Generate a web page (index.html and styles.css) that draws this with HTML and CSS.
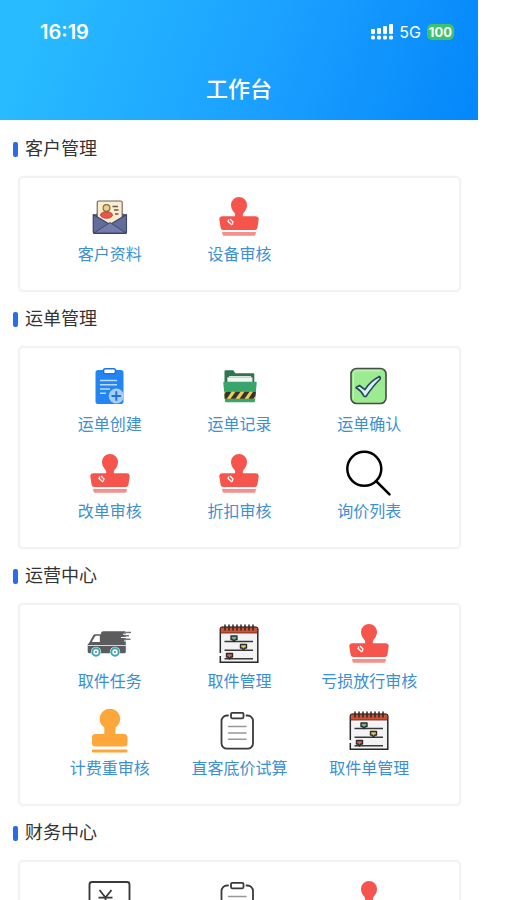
FILE: index.html
```html
<!DOCTYPE html>
<html lang="zh-CN">
    <head>
        <meta charset="utf-8">
        <title>工作台</title>
        <meta name="viewport" content="width=device-width, initial-scale=1.0">
        <link rel="stylesheet" href="styles.css">
    </head>
    <body>
        <svg class="sprite" width="0" height="0" aria-hidden="true">
            <symbol id="stamp" viewBox="0 0 40 40">
                <path fill="#f5554d" d="M20 1a8 8 0 0 1 8 8c0 3.500-1.500 5.500-3.200 7.500-1 1.200-1.200 2.600-.8 3.700h12.500c2 0 3.300 1.200 3.200 3.200L38.500 31c-.2 2-1 3-3 3h-31c-2 0-2.800-1-3-3L.3 23.400c-.1-2 1.200-3.200 3.200-3.200H16c.4-1.100.2-2.500-.8-3.700C13.500 14.500 12 12.500 12 9a8 8 0 0 1 8-8z"/>
                <path fill="#f4908c" d="M3 36h34l-.5 2.500c-.2.800-.7 1.300-1.500 1.300H5c-.8 0-1.300-.5-1.500-1.300z"/>
                <path fill="none" stroke="#fff" stroke-width="1.200" d="M8.500 25l4.500 4M11 23l3.500 3.500M9.500 23.500v2.500M13.500 26.500v2"/>
            </symbol>
            <symbol id="stamp-orange" viewBox="0 0 40 40">
                <path fill="#fda63a" d="M20-1.300a10.200 10.200 0 0 1 5.500 18.800V24H34a3.500 3.500 0 0 1 3.500 3.500V33a3.500 3.500 0 0 1-3.500 3.500H5.500A3.500 3.500 0 0 1 2 33v-5.500A3.500 3.500 0 0 1 5.500 24h8.800v-6.500A10.200 10.200 0 0 1 20-1.300z"/>
                <rect x="2" y="39.500" width="35.500" height="3" rx="1" fill="#fda63a"/>
            </symbol>
            <symbol id="envelope" viewBox="0 0 40 40">
                <path fill="#4d5680" d="M3 19l4-1.500h26l4 1.500v18.500H3z"/>
                <rect x="7.200" y="5" width="25" height="28" rx="1.500" fill="#fbebcf" stroke="#6b6259" stroke-width="1.100"/>
                <circle cx="16.500" cy="12" r="3.400" fill="#f5c98a" stroke="#6f7a3c" stroke-width="1.200"/>
                <ellipse cx="16.500" cy="19" rx="6" ry="3.300" fill="#ee5548" stroke="#91463e" stroke-width=".8"/>
                <path stroke="#5f5a55" stroke-width="1.300" d="M22.500 10.500H28M24 14h4.500M25 18h3.500"/>
                <path fill="#626d9b" stroke="#3c4365" stroke-width="1.100" stroke-linejoin="round" d="M3.200 18.500L20 28.500l16.500-10V36c0 .9-.5 1.400-1.400 1.400H4.600c-.9 0-1.400-.5-1.400-1.400z"/>
                <path fill="#737dab" stroke="#3c4365" stroke-width=".9" d="M4 37l16-10.500L36 37z"/>
            </symbol>
            <symbol id="order-new" viewBox="0 0 40 40">
                <rect x="5.500" y="4" width="28" height="34" rx="2.800" fill="#2385f4"/>
                <rect x="13.500" y="2.800" width="12" height="5" rx="1.800" fill="#fff" stroke="#1d74df" stroke-width="1.600"/>
                <path stroke="#b9dcff" stroke-width="1.500" d="M10 14.500h17M10 18.700h17M10 23h10M10 27.300h6"/>
                <circle cx="26.300" cy="30" r="7.600" fill="#a7cdfa"/>
                <path stroke="#2173dc" stroke-width="2" stroke-linecap="round" d="M26.300 26v8M22.300 30h8"/>
            </symbol>
            <symbol id="folder" viewBox="0 0 40 40">
                <path fill="#2f7353" d="M5.500 5.500c0-.9.500-1.300 1.300-1.300h7.500l2 3h17.500c1 0 1.500.5 1.500 1.400V20H5.500z"/>
                <path fill="#f2f6f3" stroke="#c5d2ca" stroke-width=".6" d="M8.500 11.500h24.700V19H8.500z"/>
                <path fill="#d9e4dc" d="M10 10h22v1.500H10z"/>
                <path fill="#39a46b" d="M4.300 17c-.2-.8.100-1.200.9-1.200h31.600c.8 0 1.100.400.9 1.200L36 35c-.1.900-.6 1.300-1.500 1.300h-27C6.600 36.300 6 35.900 6 35z"/>
                <path fill="#f0cd4f" d="M5 25.800h32l-.8 7H5.700z"/>
                <path fill="#303436" d="M7 25.800h5.500L7.800 32.800H5.700l-.2-4.500zM16.500 25.800h5l-5 7h-5zM25.500 25.800h5l-5 7h-5zM34 25.800h3l-.6 4-2 3h-5z"/>
            </symbol>
            <symbol id="confirm" viewBox="0 0 40 40">
                <rect x="2" y="2.500" width="35" height="35" rx="5.500" fill="#9ceb91" stroke="#444d46" stroke-width="1.600"/>
                <path fill="none" stroke="#c8f7c2" d="M4.500 33V9c0-3 1.200-4.200 4-4.200H31"/>
                <path fill="#d5f0f8" stroke="#294756" stroke-width="1.600" stroke-linejoin="round" d="M7 21.500l3.500-2 5.300 4.200C19.500 18 24 13.700 30.500 10.500c.9.700 1 1.500.7 2.500C26.500 17.500 22 23 17 30.500h-1.800C13.500 27 11 24 7 21.500z"/>
            </symbol>
            <symbol id="search" viewBox="0 0 40 40">
                <circle cx="15.300" cy="15.800" r="17" fill="none" stroke="#000" stroke-width="2.500"/>
                <path stroke="#000" stroke-width="2.500" stroke-linecap="round" d="M27 28l13.500 13.300"/>
            </symbol>
            <symbol id="truck" viewBox="0 0 40 40">
                <path fill="#5c5c5f" d="M11 10.500c.2-1.500 1-2.300 2.500-2.300H34c1.200 0 1.800.6 1.800 1.700v18.500c0 1.200-.6 1.800-1.800 1.800H-.5c-1.200 0-1.800-.6-1.800-1.700v-6.300c0-1 .4-1.600 1.200-2L3 12.800c.5-1 1.200-1.500 2.300-1.500H11z"/>
                <path fill="#fff" d="M1.800 19l3.200-5.500c.3-.5.600-.7 1.200-.7h3.600V19z"/>
                <path stroke="#d8d8da" stroke-width="1.200" d="M-2 22.500h38"/>
                <path stroke="#77777a" stroke-width="1.400" d="M34 9.500h7M34 12.800h5M34 16.200h6.500"/>
                <path stroke="#fff" stroke-width="1" d="M33 11.200h8M31 14.500h9M34 17.900h5"/>
                <circle cx="6" cy="29" r="5.200" fill="#fff"/>
                <circle cx="25" cy="29" r="5.200" fill="#fff"/>
                <g fill="#fff" stroke="#35a5bd" stroke-width="2">
                    <circle cx="6" cy="29" r="3.700"/>
                    <circle cx="25" cy="29" r="3.700"/>
                </g>
                <circle cx="6" cy="29" r="1" fill="#6f7b80"/>
                <circle cx="25" cy="29" r="1" fill="#6f7b80"/>
            </symbol>
            <symbol id="calendar" viewBox="0 0 40 40">
                <path fill="#f3f3f4" stroke="#28282a" stroke-width="1.500" d="M1.300 30V6.500c0-1.500.6-2.300 2-2.300h33.200c1.500 0 2.300.8 2.300 2.300v32.700H1.300V33"/>
                <path fill="#cf5133" stroke="#4d2922" stroke-width=".8" d="M1.500 10V6c0-1.200.6-1.800 1.700-1.800h33.600c1.100 0 1.800.6 1.800 1.800v4z"/>
                <path stroke="#302624" stroke-width="1.500" stroke-linecap="round" d="M6 2v5M10 2v5M14 2v5M18 2v5M22 2v5M26 2v5M30 2v5M34 2v5"/>
                <path stroke="#39393b" stroke-width="1.400" d="M5.500 18.500H34M5.500 27.300H34M5.500 35.700H34"/>
                <g stroke="#2d2d2e" stroke-width="1.400" stroke-linejoin="round">
                    <path fill="#67b7a2" d="M12 13h6v3.500h-1.500L15 18.500l-1.500-2H12z"/>
                    <path fill="#e5c952" d="M21.500 21.500h6V25H26l-1.500 2-1.500-2h-1.500z"/>
                    <path fill="#d96446" d="M7.500 30.500h6V34H12l-1.500 2L9 34H7.500z"/>
                </g>
            </symbol>
            <symbol id="clipboard" viewBox="0 0 40 40">
                <path fill="none" stroke="#3a3a3c" stroke-width="1.800" stroke-linecap="round" d="M9 5.500H8A5.500 5.500 0 0 0 2.500 11v22A5.500 5.500 0 0 0 8 38.700h20.500A5.500 5.500 0 0 0 34 33V11a5.500 5.500 0 0 0-5.500-5.500h-1"/>
                <rect x="12" y="2.800" width="12.500" height="5.500" rx="1.200" fill="none" stroke="#3a3a3c" stroke-width="1.800"/>
                <path stroke="#98989b" stroke-width="1.500" stroke-linecap="round" d="M9.500 16.500h17.500M9.500 23h17.500M9.500 29.300h17.500"/>
            </symbol>
            <symbol id="yen" viewBox="0 0 40 40">
                <rect x="-.5" y="2" width="40" height="37" rx="2.500" fill="none" stroke="#3a3a3c" stroke-width="1.900"/>
                <path fill="none" stroke="#3a3a3c" stroke-width="1.800" d="M9.500 10l6 7.500 6-7.500M8.500 17.700h14M8.500 22.500h14M15.500 17.500V30"/>
            </symbol>
        </svg>

        <div class="app">
            <header class="header">
                <div class="status-bar">
                    <span class="time">16:19</span>
                    <span class="status-right">
                        <svg class="signal" viewBox="0 0 22 16" aria-hidden="true">
                            <g fill="#fff">
                                <rect x="0" y="5" width="4" height="5" rx="1"/>
                                <rect x="6" y="4" width="4" height="6" rx="1"/>
                                <rect x="12" y="2" width="4" height="8" rx="1"/>
                                <rect x="18" y="0" width="4" height="10" rx="1"/>
                                <rect x="0" y="11.500" width="4" height="4" rx="1.500"/>
                                <rect x="6" y="11.500" width="4" height="4" rx="1.500"/>
                                <rect x="12" y="11.500" width="4" height="4" rx="1.500"/>
                                <rect x="18" y="11.500" width="4" height="4" rx="1.500"/>
                            </g>
                        </svg>
                        <span class="network">5G</span>
                        <span class="battery">100</span>
                    </span>
                </div>
                <h1>工作台</h1>
            </header>

            <main>
                <section>
                    <h2>客户管理</h2>
                    <div class="card">
                        <a class="item" href="#"><svg class="icon"><use href="#envelope"/></svg>客户资料</a>
                        <a class="item" href="#"><svg class="icon"><use href="#stamp"/></svg>设备审核</a>
                    </div>
                </section>

                <section>
                    <h2>运单管理</h2>
                    <div class="card">
                        <a class="item" href="#"><svg class="icon"><use href="#order-new"/></svg>运单创建</a>
                        <a class="item" href="#"><svg class="icon"><use href="#folder"/></svg>运单记录</a>
                        <a class="item" href="#"><svg class="icon"><use href="#confirm"/></svg>运单确认</a>
                        <a class="item" href="#"><svg class="icon"><use href="#stamp"/></svg>改单审核</a>
                        <a class="item" href="#"><svg class="icon"><use href="#stamp"/></svg>折扣审核</a>
                        <a class="item" href="#"><svg class="icon"><use href="#search"/></svg>询价列表</a>
                    </div>
                </section>

                <section>
                    <h2>运营中心</h2>
                    <div class="card">
                        <a class="item" href="#"><svg class="icon"><use href="#truck"/></svg>取件任务</a>
                        <a class="item" href="#"><svg class="icon"><use href="#calendar"/></svg>取件管理</a>
                        <a class="item" href="#"><svg class="icon"><use href="#stamp"/></svg>亏损放行审核</a>
                        <a class="item" href="#"><svg class="icon"><use href="#stamp-orange"/></svg>计费重审核</a>
                        <a class="item" href="#"><svg class="icon"><use href="#clipboard"/></svg>直客底价试算</a>
                        <a class="item" href="#"><svg class="icon"><use href="#calendar"/></svg>取件单管理</a>
                    </div>
                </section>

                <section>
                    <h2>财务中心</h2>
                    <div class="card">
                        <a class="item" href="#"><svg class="icon"><use href="#yen"/></svg></a>
                        <a class="item" href="#"><svg class="icon"><use href="#clipboard"/></svg></a>
                        <a class="item" href="#"><svg class="icon"><use href="#stamp"/></svg></a>
                    </div>
                </section>
            </main>
        </div>
    </body>
</html>
```
FILE: styles.css
```css
* {
    box-sizing: border-box;
}
body {
    margin: 0;
    background: #fff;
    color: #333;
    font-family: "Liberation Sans", "Noto Sans CJK SC", sans-serif;
}
.sprite {
    position: absolute;
}
.sprite symbol {
    overflow: visible;
}
.app {
    height: 100vh;
    margin-right: 29px;
    overflow: hidden;
}

/* header */
.header {
    background: linear-gradient(110deg, #28bbff 8%, #1a9fff 58%, #0588fa 98%);
    color: #fff;
}
.status-bar {
    display: flex;
    justify-content: space-between;
    align-items: center;
    padding: 20px 24px 16px 40px;
    line-height: 24px;
}
.time {
    font: 600 20px/24px Inter, sans-serif;
}
.status-right {
    display: flex;
    align-items: center;
    gap: 6px;
}
.signal {
    width: 22px;
    height: 16px;
}
.network {
    font: 400 16px/24px Inter, sans-serif;
}
.battery {
    padding: 0 2px;
    border-radius: 5px;
    background: #3cc46a;
    font: 700 13px/16px Inter, sans-serif;
}
h1 {
    margin: 0;
    padding: 14px 0;
    font-size: 22px;
    font-weight: 500;
    line-height: 32px;
    text-align: center;
}

/* sections */
main {
    padding-top: 2px;
}
h2 {
    display: flex;
    align-items: center;
    gap: 7px;
    margin: 0;
    padding-left: 13px;
    font-size: 18px;
    font-weight: 400;
    line-height: 54px;
}
h2::before {
    content: "";
    width: 5px;
    height: 15px;
    border-radius: 2px;
    background: #2b6de8;
}
.card {
    display: grid;
    grid-template-columns: repeat(3, 1fr);
    row-gap: 18px;
    margin: 0 17px 0 18px;
    padding: 18px 25px 25px;
    border: 2px solid #f2f2f3;
    border-radius: 5px;
    box-shadow: 0 0 2px #f2f2f3;
}
.item {
    display: flex;
    flex-direction: column;
    align-items: center;
    gap: 9px;
    color: #3b8fd2;
    font-size: 16px;
    line-height: 20px;
    text-decoration: none;
    white-space: nowrap;
}
.icon {
    width: 40px;
    height: 40px;
    overflow: visible;
}
```
